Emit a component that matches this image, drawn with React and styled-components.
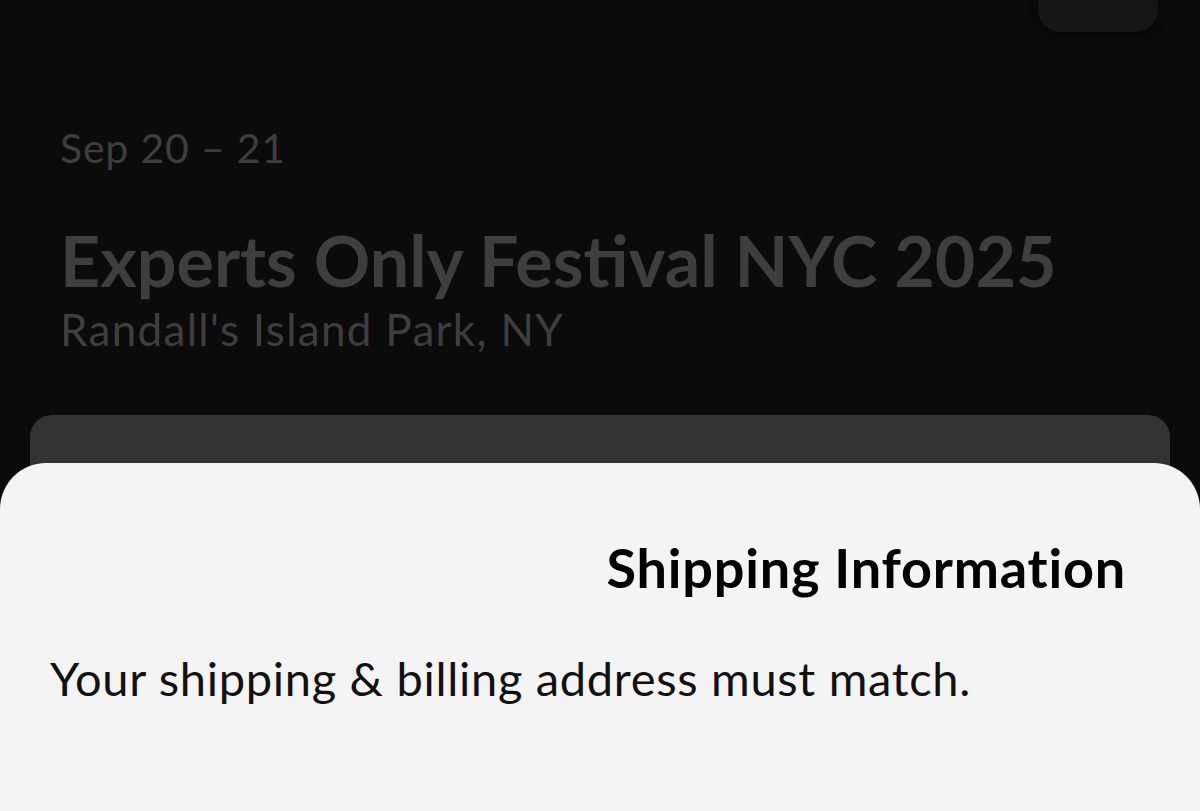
import React from "react";
import styled, { createGlobalStyle } from "styled-components";

const GlobalStyle = createGlobalStyle`
  html, body {
    margin: 0;
    padding: 0;
    background: #0b0b0b;
  }
  * {
    box-sizing: border-box;
  }
`;

const Screen = styled.div`
  position: relative;
  width: 1200px;
  height: 811px;
  overflow: hidden;
  background: #0b0b0b;
  font-family: Lato, "Open Sans", sans-serif;
`;

const TopBar = styled.div`
  display: flex;
  justify-content: flex-end;
  padding-right: 42px;
`;

const MenuChip = styled.div`
  width: 120px;
  height: 72px;
  margin-top: -40px;
  border-radius: 22px;
  background: #161616;
  box-shadow: 0 2px 6px rgba(0, 0, 0, 0.5);
`;

const EventInfo = styled.div`
  padding: 95px 60px 0;
  color: #3e3e3e;
`;

const DateLine = styled.div`
  font-size: 41px;
  font-weight: 400;
  line-height: 1;
  letter-spacing: 0.8px;
`;

const Title = styled.h1`
  margin: 57px 0 0;
  font-size: 70px;
  font-weight: 700;
  line-height: 1;
  letter-spacing: 0;
`;

const Venue = styled.div`
  margin-top: 12px;
  font-size: 44px;
  font-weight: 400;
  line-height: 1;
  letter-spacing: 1.3px;
`;

const TicketCard = styled.div`
  margin: 64px 30px 0;
  height: 200px;
  border-radius: 22px;
  background: #333333;
`;

const Sheet = styled.div`
  position: absolute;
  left: 0;
  right: 0;
  bottom: 0;
  top: 463px;
  background: #f4f4f4;
  border-radius: 46px 46px 0 0;
  padding: 78px 74px 0 50px;
`;

const SheetHeader = styled.div`
  display: flex;
  justify-content: flex-end;
`;

const SheetTitle = styled.h2`
  margin: 0;
  font-size: 54px;
  font-weight: 700;
  line-height: 1;
  color: #000;
  letter-spacing: 0.8px;
`;

const SheetText = styled.p`
  margin: 60px 0 0;
  font-size: 47px;
  font-weight: 400;
  line-height: 1;
  color: #111;
  letter-spacing: 0.7px;
`;

export default function App() {
  return (
    <>
      <GlobalStyle />
      <Screen>
        <TopBar>
          <MenuChip />
        </TopBar>

        <EventInfo>
          <DateLine>Sep 20 – 21</DateLine>
          <Title>Experts Only Festival NYC 2025</Title>
          <Venue>Randall's Island Park, NY</Venue>
        </EventInfo>

        <TicketCard />

        <Sheet>
          <SheetHeader>
            <SheetTitle>Shipping Information</SheetTitle>
          </SheetHeader>
          <SheetText>Your shipping &amp; billing address must match.</SheetText>
        </Sheet>
      </Screen>
    </>
  );
}
